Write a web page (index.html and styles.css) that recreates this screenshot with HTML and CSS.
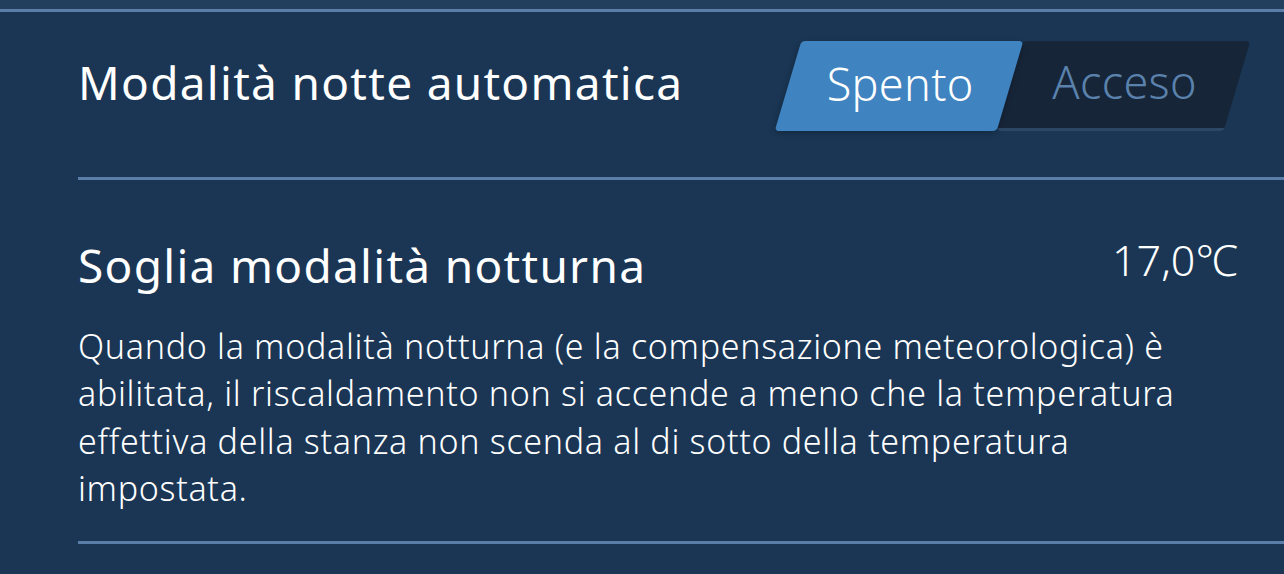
FILE: index.html
```html
<!DOCTYPE html>
<html lang="it">
<head>
<meta charset="utf-8">
<link rel="stylesheet" href="styles.css">
</head>
<body>
<div class="top"></div>
<div class="content">
  <div class="row row-toggle">
    <div class="title">Modalità notte automatica</div>
    <div class="toggle">
      <div class="seg seg-on"><span>Spento</span></div>
      <div class="seg seg-off"><span>Acceso</span></div>
    </div>
  </div>
  <div class="divider"></div>
  <div class="block">
    <div class="row row-value">
      <div class="title">Soglia modalità notturna</div>
      <div class="value">17,0℃</div>
    </div>
    <p class="desc">Quando la modalità notturna (e la compensazione meteorologica) è abilitata, il riscaldamento non si accende a meno che la temperatura effettiva della stanza non scenda al di sotto della temperatura impostata.</p>
  </div>
  <div class="divider"></div>
</div>
</body>
</html>
```
FILE: styles.css
```css
* { box-sizing: border-box; }
html, body { margin: 0; padding: 0; }
body {
  width: 1284px;
  height: 574px;
  overflow: hidden;
  background: #1a3654;
  font-family: "Noto Sans", "DejaVu Sans", sans-serif;
  color: #ffffff;
}
.top {
  height: 12px;
  background: #22405e;
  border-bottom: 3px solid #5b7ea8;
}
.content {
  padding-left: 78px;
}
.row {
  display: flex;
  align-items: center;
  justify-content: space-between;
}
.row-toggle {
  height: 165px;
  padding-right: 47px;
}
.title {
  font-size: 46px;
  font-weight: 400;
  letter-spacing: 1.3px;
  line-height: 1;
}
.row-toggle .title { margin-top: -25px; }
.toggle {
  display: flex;
  margin-top: -18px;
}
.seg {
  width: 222px;
  height: 90px;
  transform: skewX(-16.5deg);
  border-radius: 4px;
  display: flex;
  align-items: center;
  justify-content: center;
}
.seg span {
  transform: skewX(16.5deg);
  font-size: 45px;
  font-weight: 300;
  line-height: 1;
  margin-top: -6px;
  letter-spacing: 0.3px;
}
.seg-on {
  background: #3f83c0;
  color: #ffffff;
  position: relative;
  z-index: 1;
  box-shadow: 0 2px 6px rgba(0,0,0,0.25);
}
.seg-off {
  background: #172538;
  color: #5a82ad;
  border-bottom: 3px solid #2c4766;
  width: 227px;
}
.divider {
  height: 3px;
  background: #5b7ea8;
}
.block {
  padding-top: 62px;
  padding-right: 46px;
  padding-bottom: 28px;
}
.row-value { align-items: flex-start; }
.value {
  font-size: 43px;
  font-weight: 300;
  line-height: 1;
  margin-top: -4px;
}
.desc {
  margin: 35px 0 0 0;
  font-size: 34px;
  font-weight: 300;
  line-height: 47.4px;
  letter-spacing: 0.7px;
  max-width: 1110px;
}
```
